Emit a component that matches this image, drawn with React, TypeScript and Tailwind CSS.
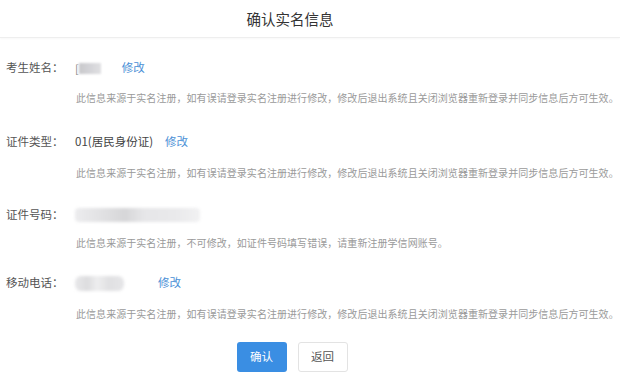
import React from "react";

const font = { fontFamily: '"Noto Sans CJK SC", "Noto Sans", sans-serif' };

const NOTICE_A =
  "此信息来源于实名注册，如有误请登录实名注册进行修改，修改后退出系统且关闭浏览器重新登录并同步信息后方可生效。";
const NOTICE_B = "此信息来源于实名注册，不可修改，如证件号码填写错误，请重新注册学信网账号。";

function Row({ label, children, mt }: { label: string; children: React.ReactNode; mt: string }) {
  return (
    <div className={`flex items-center h-[20px] pl-[6px] ${mt}`}>
      <div className="w-[69px] shrink-0 text-[11.5px] text-[#555]">{label}</div>
      <div className="flex items-center text-[11.5px] text-[#444]">{children}</div>
    </div>
  );
}

function Notice({ text, mt }: { text: string; mt: string }) {
  return (
    <div className={`pl-[76px] pr-[4px] h-[14px] leading-[14px] text-[10px] tracking-[0.05px] text-[#9a9a9a] whitespace-nowrap ${mt}`}>
      {text}
    </div>
  );
}

function Link({ className }: { className: string }) {
  return <span className={`text-[11.5px] text-[#4a8fd6] ${className}`}>修改</span>;
}

export default function App() {
  return (
    <div className="w-[620px] h-[376px] bg-white overflow-hidden" style={font}>
      <div className="h-[38px] flex items-center justify-center pr-[40px] border-b border-[#eeeeee] shadow-[0_1px_2px_rgba(0,0,0,0.03)]">
        <span className="text-[14.5px] text-[#333]">确认实名信息</span>
      </div>

      <Row label="考生姓名：" mt="mt-[20px]">
        <span className="text-[#888] text-[11px]">[</span>
        <div className="w-[22px] h-[11px] bg-gradient-to-r from-[#c8c8cc] to-[#e0e0e3] blur-[1px]" />
        <Link className="ml-[21px]" />
      </Row>
      <Notice text={NOTICE_A} mt="mt-[13px]" />

      <Row label="证件类型：" mt="mt-[27px]">
        <span>01(居民身份证)</span>
        <Link className="ml-[12px]" />
      </Row>
      <Notice text={NOTICE_A} mt="mt-[14px]" />

      <Row label="证件号码：" mt="mt-[25px]">
        <div className="w-[125px] h-[14px] rounded-[4px] bg-[linear-gradient(90deg,#ececee_0%,#e2e2e4_20%,#d6d6d8_40%,#e6e6e8_55%,#e9e9eb_80%,#f1f1f2_100%)] blur-[1.5px]" />
      </Row>
      <Notice text={NOTICE_B} mt="mt-[11px]" />

      <Row label="移动电话：" mt="mt-[23px]">
        <div className="w-[49px] h-[15px] rounded-[6px] bg-[linear-gradient(90deg,#e8e8ea_0%,#dcdcde_25%,#eeeeef_45%,#e0e0e2_70%,#e6e6e8_100%)] blur-[1.5px]" />
        <Link className="ml-[34px]" />
      </Row>
      <Notice text={NOTICE_A} mt="mt-[14px]" />

      <div className="flex justify-center gap-[11px] mt-[21px] pr-[36px]">
        <button className="w-[50px] h-[30px] rounded-[3px] bg-[#3a8ee3] text-white text-[11.5px]">确认</button>
        <button className="w-[50px] h-[30px] rounded-[3px] bg-white border border-[#e3e3e3] text-[#555] text-[11.5px]">返回</button>
      </div>
    </div>
  );
}
